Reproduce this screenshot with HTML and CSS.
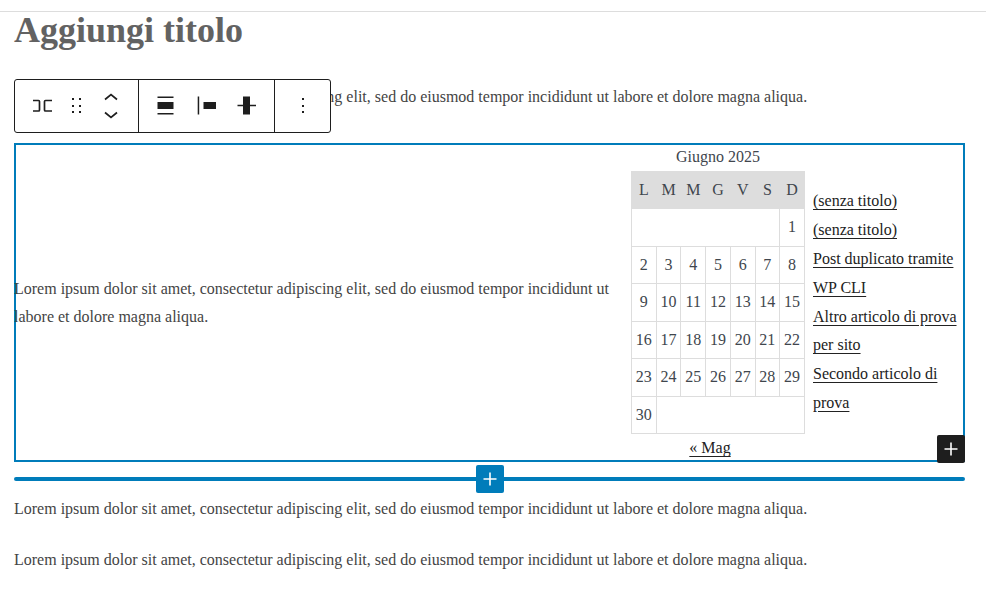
FILE: index.html
```html
<!DOCTYPE html>
<html lang="it">
<head>
<meta charset="utf-8">
<meta name="viewport" content="width=device-width, initial-scale=1">
<title>Aggiungi titolo</title>
<link rel="stylesheet" href="styles.css">
</head>
<body>
<main class="editor">
  <h1 class="title">Aggiungi titolo</h1>
  <p class="text">Lorem ipsum dolor sit amet, consectetur adipiscing elit, sed do eiusmod tempor incididunt ut labore et dolore magna aliqua.</p>

  <section class="row-block">
    <div class="toolbar" role="toolbar" aria-label="Strumenti del blocco">
      <div class="group group-block">
        <button class="tool" type="button" aria-label="Riga"><svg width="24" height="24" viewBox="0 0 24 24" fill="none" stroke="#1e1e1e" stroke-width="1.7"><path d="M3 6.500h5.500a1 1 0 0 1 1 1v8.500a1 1 0 0 1-1 1H3M22 6.500h-6.500a1 1 0 0 0-1 1v8.500a1 1 0 0 0 1 1H22"/></svg></button>
        <button class="tool" type="button" aria-label="Trascina"><svg width="24" height="24" viewBox="0 0 24 24" fill="#1e1e1e"><path d="M7 4h2v2H7zM14 4h2v2h-2zM7 11h2v2H7zM14 11h2v2h-2zM7 17h2v2H7zM14 17h2v2h-2z"/></svg></button>
        <div class="movers">
          <button class="mover" type="button" aria-label="Sposta su"><svg width="14" height="8" viewBox="0 0 14 8" fill="none" stroke="#1e1e1e" stroke-width="1.700"><path d="M1 6.500 7 1.500l6 5"/></svg></button>
          <button class="mover" type="button" aria-label="Sposta giù"><svg width="14" height="8" viewBox="0 0 14 8" fill="none" stroke="#1e1e1e" stroke-width="1.700"><path d="m1 1.500 6 5 6-5"/></svg></button>
        </div>
      </div>
      <div class="group group-align">
        <button class="tool" type="button" aria-label="Allinea"><svg width="24" height="24" viewBox="0 0 24 24" fill="#1e1e1e"><path d="M4.500 2.500h16V4h-16zM4.500 8h16v7h-16zM4.500 19h16v1.500h-16z"/></svg></button>
        <button class="tool" type="button" aria-label="Giustifica a sinistra"><svg width="24" height="24" viewBox="0 0 24 24" fill="#1e1e1e"><path d="M3.700 2.500h1.500v18H3.700zM9.500 8H22v7H9.500z"/></svg></button>
        <button class="tool" type="button" aria-label="Allinea verticalmente"><svg width="24" height="24" viewBox="0 0 24 24" fill="#1e1e1e"><path d="M2.500 10.700H8V2.500h7v8.200h6v1.500h-6v8.300H8v-8.300H2.500z"/></svg></button>
      </div>
      <div class="group group-more">
        <button class="tool" type="button" aria-label="Opzioni"><svg width="24" height="24" viewBox="0 0 24 24" fill="#1e1e1e"><path d="M11 4h2v2h-2zM11 11h2v2h-2zM11 17h2v2h-2z"/></svg></button>
      </div>
    </div>

    <p class="row-text">Lorem ipsum dolor sit amet, consectetur adipiscing elit, sed do eiusmod tempor incididunt ut labore et dolore magna aliqua.</p>

    <div class="calendar">
      <table>
        <caption>Giugno 2025</caption>
        <thead>
          <tr><th scope="col">L</th><th scope="col">M</th><th scope="col">M</th><th scope="col">G</th><th scope="col">V</th><th scope="col">S</th><th scope="col">D</th></tr>
        </thead>
        <tbody>
          <tr><td colspan="6"></td><td>1</td></tr>
          <tr><td>2</td><td>3</td><td>4</td><td>5</td><td>6</td><td>7</td><td>8</td></tr>
          <tr><td>9</td><td>10</td><td>11</td><td>12</td><td>13</td><td>14</td><td>15</td></tr>
          <tr><td>16</td><td>17</td><td>18</td><td>19</td><td>20</td><td>21</td><td>22</td></tr>
          <tr><td>23</td><td>24</td><td>25</td><td>26</td><td>27</td><td>28</td><td>29</td></tr>
          <tr><td>30</td><td colspan="6"></td></tr>
        </tbody>
      </table>
      <nav class="calendar-nav"><a href="#mag">« Mag</a></nav>
    </div>

    <ul class="posts">
      <li><a href="#p1">(senza titolo)</a></li>
      <li><a href="#p2">(senza titolo)</a></li>
      <li><a href="#p3">Post duplicato tramite WP CLI</a></li>
      <li><a href="#p4">Altro articolo di prova per sito</a></li>
      <li><a href="#p5">Secondo articolo di prova</a></li>
    </ul>

    <button class="add add-inside" type="button" aria-label="Aggiungi blocco"><svg width="14" height="14" viewBox="0 0 14 14" fill="none" stroke="#fff" stroke-width="1.600"><path d="M7 .5v13M.5 7h13"/></svg></button>
  </section>

  <div class="inserter">
    <button class="add add-between" type="button" aria-label="Inserisci blocco"><svg width="14" height="14" viewBox="0 0 14 14" fill="none" stroke="#fff" stroke-width="1.600"><path d="M7 .5v13M.5 7h13"/></svg></button>
  </div>

  <p class="text">Lorem ipsum dolor sit amet, consectetur adipiscing elit, sed do eiusmod tempor incididunt ut labore et dolore magna aliqua.</p>
  <p class="text">Lorem ipsum dolor sit amet, consectetur adipiscing elit, sed do eiusmod tempor incididunt ut labore et dolore magna aliqua.</p>
</main>
</body>
</html>
```
FILE: styles.css
```css
* {
  box-sizing: border-box;
}

body {
  margin: 11px 0 0;
  background: #fff;
  color: #444;
  font: 16px/28px "Liberation Serif", "Times New Roman", serif;
}

.editor {
  border-top: 1px solid #ddd;
  padding: 0 21px 0 14px;
}

.title {
  margin: 0 0 35px;
  color: #626262;
  font-size: 36px;
  line-height: 36px;
}

.text {
  margin: 0 0 23px;
}

.row-block {
  position: relative;
  display: flex;
  align-items: center;
  gap: 8px;
  margin-top: 32px;
  box-shadow: inset 0 0 0 2px #007cba;
}

.row-text {
  flex: 1;
  margin: 0;
}

.toolbar {
  position: absolute;
  left: 0;
  bottom: 100%;
  display: flex;
  height: 54px;
  margin-bottom: 10px;
  background: #fff;
  border: 1px solid #1e1e1e;
  border-radius: 3px;
}

.group {
  display: flex;
  align-items: center;
}

.group + .group {
  border-left: 1px solid #1e1e1e;
}

.group-block {
  gap: 11px;
  width: 123px;
  padding-left: 15px;
}

.group-align {
  gap: 17px;
  width: 136px;
  padding-left: 14px;
}

.group-more {
  justify-content: center;
  width: 56px;
}

button {
  padding: 0;
  border: 0;
  background: none;
}

.tool {
  display: flex;
}

.movers {
  display: flex;
  flex-direction: column;
  align-items: center;
  gap: 10px;
  width: 22px;
}

.mover {
  display: flex;
}

.calendar {
  width: 174px;
  color: #40464d;
}

.calendar table {
  width: 100%;
  height: 263px;
  border-collapse: collapse;
  table-layout: fixed;
}

.calendar th,
.calendar td {
  padding: 4px 0;
  border: 1px solid #ddd;
  font-weight: 400;
  text-align: center;
}

.calendar th {
  background: #ddd;
}

.calendar-nav {
  padding-right: 16px;
  text-align: center;
}

a {
  color: #222;
  text-decoration: underline;
  text-underline-offset: 3px;
}

.posts {
  width: 152px;
  margin: 0;
  padding: 0;
  list-style: none;
  line-height: 1.8;
}

.add {
  position: absolute;
  display: flex;
  align-items: center;
  justify-content: center;
  width: 28px;
  height: 28px;
  border-radius: 2px;
}

.add-inside {
  right: 0;
  bottom: -1px;
  background: #1e1e1e;
}

.inserter {
  position: relative;
  display: flex;
  align-items: center;
  justify-content: center;
  height: 4px;
  margin: 15px 0 14px;
  border-radius: 2px;
  background: #007cba;
}

.add-between {
  background: #007cba;
}
```
